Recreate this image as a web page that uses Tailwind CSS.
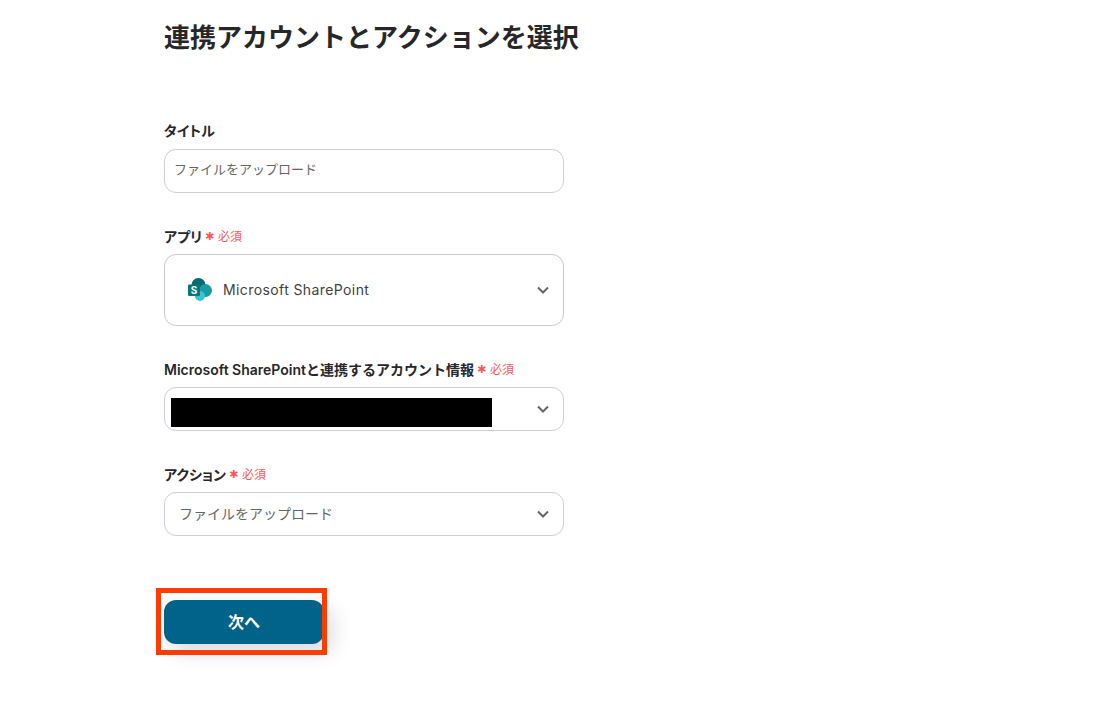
<!DOCTYPE html>
<html lang="ja">
<head>
  <meta charset="UTF-8" />
  <title>連携アカウントとアクションを選択</title>
  <script src="https://cdn.jsdelivr.net/npm/@tailwindcss/browser@4"></script>
</head>
<body class="bg-white h-[704px] overflow-hidden font-['Inter','Noto_Sans_CJK_JP',sans-serif] text-[#27272a]">

  <div class="relative w-[400px] ml-[164px]">
    <!-- Cut off text at the top edge -->
    <p class="h-[2px] overflow-hidden text-xs leading-none text-[#555] pl-6 -translate-y-[10px]">設定</p>

    <h1 class="mt-[19px] text-[26px] leading-[34px] font-bold whitespace-nowrap">連携アカウントとアクションを選択</h1>

    <!-- Title -->
    <label class="block mt-[67px] text-[14px] leading-[18px] font-semibold [font-feature-settings:'palt']">タイトル</label>
    <div class="mt-[9px] h-[44px] flex items-center pl-[9px] pr-[10px] pb-[2px] border border-[#cdd0dc] rounded-[12px] text-[13px] text-[#666]">ファイルをアップロード</div>

    <!-- App -->
    <div class="mt-[35px] flex items-center h-[18px]">
      <span class="mb-[2px] text-[14px] font-semibold [font-feature-settings:'palt']">アプリ</span>
      <span class="ml-[3px] w-[13px] text-[11px] text-[#fb5a5a] font-['DejaVu_Sans']">✱</span>
      <span class="text-[12px] text-[#fb5a5a]">必須</span>
    </div>
    <div class="mt-[8px] h-[72px] flex items-center pl-[22px] pr-[13px] border border-[#c9c9cf] rounded-[12px]">
      <svg class="w-[26px] h-[26px]" viewBox="0 0 26 26">
        <circle cx="11.5" cy="8" r="7" fill="#036c70" />
        <circle cx="18.5" cy="13.5" r="6.5" fill="#1a9ba1" />
        <circle cx="13" cy="19" r="5" fill="#37c6d0" />
        <rect x="1" y="7.5" width="12" height="11.5" rx="1" fill="#03787c" />
        <text x="7" y="17" text-anchor="middle" font-size="10" font-weight="700" fill="#fff" font-family="Inter">S</text>
      </svg>
      <span class="ml-[10px] pb-[2px] text-[14px] tracking-[0.4px] text-[#3f3f46]">Microsoft SharePoint</span>
      <svg class="ml-auto w-[14px] h-[14px]" viewBox="0 0 14 14" fill="none" stroke="#666" stroke-width="2"><path d="M2 4.5l5 5 5-5" /></svg>
    </div>

    <!-- Account -->
    <div class="mt-[35px] flex items-center h-[18px]">
      <span class="mb-[2px] text-[14px] font-semibold">Microsoft SharePointと連携するアカウント情報</span>
      <span class="ml-[3px] w-[13px] text-[11px] text-[#fb5a5a] font-['DejaVu_Sans']">✱</span>
      <span class="text-[12px] text-[#fb5a5a]">必須</span>
    </div>
    <div class="mt-[8px] h-[44px] flex items-center pl-[6px] pr-[13px] border border-[#cdd0dc] rounded-[12px]">
      <div class="mt-[6px] w-[321px] h-[29px] bg-black"></div>
      <svg class="ml-auto w-[14px] h-[14px]" viewBox="0 0 14 14" fill="none" stroke="#666" stroke-width="2"><path d="M2 4.5l5 5 5-5" /></svg>
    </div>

    <!-- Action -->
    <div class="mt-[35px] flex items-center h-[18px]">
      <span class="mb-[2px] text-[14px] font-semibold [font-feature-settings:'palt']">アクション</span>
      <span class="ml-[3px] w-[13px] text-[11px] text-[#fb5a5a] font-['DejaVu_Sans']">✱</span>
      <span class="text-[12px] text-[#fb5a5a]">必須</span>
    </div>
    <div class="mt-[8px] h-[44px] flex items-center pl-[14px] pr-[13px] border border-[#cdd0dc] rounded-[12px]">
      <span class="pb-[2px] text-[14px] text-[#666]">ファイルをアップロード</span>
      <svg class="ml-auto w-[14px] h-[14px]" viewBox="0 0 14 14" fill="none" stroke="#666" stroke-width="2"><path d="M2 4.5l5 5 5-5" /></svg>
    </div>

    <!-- Next button -->
    <div class="relative mt-[64px] w-[160px]">
      <button class="w-full h-[44px] rounded-[12px] bg-[#01628a] text-white text-[16px] font-bold shadow-[8px_8px_20px_rgba(60,60,110,0.2)]">次へ</button>
      <div class="absolute -left-[8px] -top-[12px] w-[171px] h-[67px] border-[5px] border-[#ff3c00]"></div>
    </div>
  </div>

</body>
</html>
